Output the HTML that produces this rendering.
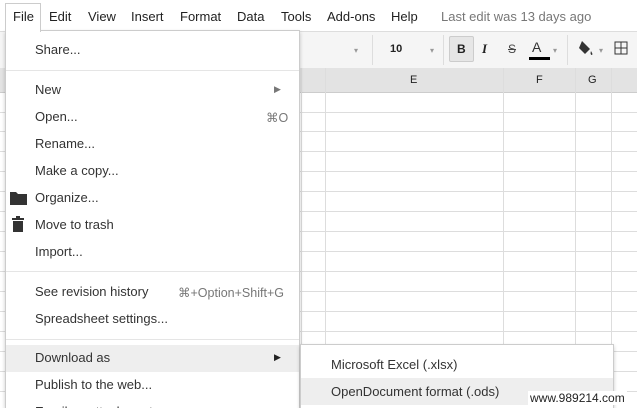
<!DOCTYPE html><html style="overflow:hidden;height:408px"><head><style>
body{margin:0;width:637px;height:408px;overflow:hidden;background:#fff;font-family:"Liberation Sans",sans-serif;position:relative;color:#222}
.a{position:absolute;white-space:nowrap}
.mb{position:absolute;left:0;top:0;z-index:4}
.mb span{position:absolute;top:9px;font-size:13px;color:#222;white-space:nowrap}
.mi{position:absolute;left:35px;font-size:13px;color:#333;white-space:nowrap}
.sc{position:absolute;font-size:12.5px;color:#777;white-space:nowrap}
.hl{position:absolute;background:#eee}
.sep{position:absolute;left:6px;width:293px;height:1px;background:#e5e5e5}
</style></head><body>
<div class="a" style="left:0;top:31px;width:637px;height:37px;background:#f5f5f5;border-top:1px solid #ddd"></div>
<div class="a" style="left:372px;top:35px;width:1px;height:30px;background:#ddd"></div>
<div class="a" style="left:443px;top:35px;width:1px;height:30px;background:#ddd"></div>
<div class="a" style="left:567px;top:35px;width:1px;height:30px;background:#ddd"></div>
<div class="a" style="left:354px;top:46px;font-size:8px;color:#999">▾</div>
<div class="a" style="left:390px;top:43px;font-size:11px;font-weight:bold">10</div>
<div class="a" style="left:430px;top:46px;font-size:8px;color:#999">▾</div>
<div class="a" style="left:449px;top:36px;width:25px;height:26px;background:#e6e6e6;border:1px solid #ccc;border-radius:2px;box-sizing:border-box"></div>
<div class="a" style="left:457px;top:42px;font-size:12px;font-weight:bold">B</div>
<div class="a" style="left:482px;top:41px;font-size:13px;font-style:italic;font-weight:bold;font-family:'Liberation Serif'">I</div>
<div class="a" style="left:508px;top:42px;font-size:12px;color:#444;text-decoration:line-through">S</div>
<div class="a" style="left:532px;top:39px;font-size:14px;color:#333">A</div>
<div class="a" style="left:529px;top:57px;width:21px;height:3px;background:#000"></div>
<div class="a" style="left:553px;top:46px;font-size:8px;color:#999">▾</div>
<svg class="a" style="left:576px;top:38px" width="20" height="20"><path d="M6 3l8 8-5 5-6-6z" fill="#333"/><path d="M15 13c1 2 2 3 1 4-1 0-2-1-1-4z" fill="#333"/></svg>
<div class="a" style="left:599px;top:46px;font-size:8px;color:#999">▾</div>
<svg class="a" style="left:614px;top:41px" width="14" height="14"><rect x="1" y="1" width="12" height="12" fill="none" stroke="#333"/><path d="M7 1v12M1 7h12" stroke="#333"/></svg>
<div class="a" style="left:0;top:68px;width:637px;height:24px;background:#e3e3e3;border-bottom:1px solid #ccc"></div>
<div class="a" style="left:410px;top:74px;font-size:11px">E</div>
<div class="a" style="left:536px;top:74px;font-size:11px">F</div>
<div class="a" style="left:588px;top:74px;font-size:11px">G</div>
<svg class="a" style="left:0;top:68px" width="637" height="340">
<g stroke="#ddd" stroke-width="1">
<path d="M301.5 0V340M325.5 0V340M503.5 0V340M575.5 0V340M611.5 0V340"/>
<path d="M0 44.5H637M0 63.5H637M0 83.5H637M0 103.5H637M0 123.5H637M0 143.5H637M0 163.5H637M0 183.5H637M0 203.5H637M0 223.5H637M0 243.5H637M0 263.5H637M0 283.5H637M0 303.5H637M0 323.5H637"/>
</g></svg>
<div class="a" style="left:0;top:0;width:637px;height:31px;background:#fff"></div>
<div class="a" style="left:5px;top:3px;width:36px;height:29px;border:1px solid #ccc;border-bottom:none;background:#fff;box-sizing:border-box;z-index:3"></div>
<div class="mb">
<span style="left:13px">File</span><span style="left:49px">Edit</span><span style="left:88px">View</span><span style="left:131px">Insert</span><span style="left:180px">Format</span><span style="left:237px">Data</span><span style="left:281px">Tools</span><span style="left:327px">Add-ons</span><span style="left:391px">Help</span><span style="left:441px;color:#777">Last edit was 13 days ago</span></div>
<div class="a" style="left:5px;top:30px;width:295px;height:378px;background:#fff;border:1px solid #ccc;border-bottom:none;box-sizing:border-box;box-shadow:0 2px 4px rgba(0,0,0,.2);z-index:2"></div>
<div style="position:absolute;left:0;top:0;width:637px;height:408px;z-index:3">
<div class="mi" style="top:42px">Share...</div>
<div class="sep" style="top:70px"></div>
<div class="mi" style="top:82px">New</div><div class="sc" style="left:274px;top:84px;font-size:9px">▶</div>
<div class="mi" style="top:109px">Open...</div><div class="sc" style="left:266px;top:110px">⌘O</div>
<div class="mi" style="top:136px">Rename...</div>
<div class="mi" style="top:163px">Make a copy...</div>
<svg class="a" style="left:10px;top:191px" width="17" height="14"><path d="M0 1h6l2 2h9v11H0z" fill="#333"/></svg>
<div class="mi" style="top:190px">Organize...</div>
<svg class="a" style="left:12px;top:216px" width="12" height="16"><path d="M0 2h12v2H0zM4 0h4v2H4zM1 5h10v11H1z" fill="#333"/></svg>
<div class="mi" style="top:217px">Move to trash</div>
<div class="mi" style="top:244px">Import...</div>
<div class="sep" style="top:271px"></div>
<div class="mi" style="top:284px">See revision history</div><div class="sc" style="left:178px;top:285px">⌘+Option+Shift+G</div>
<div class="mi" style="top:311px">Spreadsheet settings...</div>
<div class="sep" style="top:339px"></div>
<div class="hl" style="left:6px;top:345px;width:293px;height:27px"></div>
<div class="mi" style="top:350px">Download as</div><div class="sc" style="left:274px;top:352px;font-size:9px;color:#222">▶</div>
<div class="mi" style="top:377px">Publish to the web...</div>
<div class="mi" style="top:404px">Email as attachment...</div>
</div>
<div class="a" style="left:300px;top:344px;width:314px;height:64px;background:#fff;border:1px solid #ccc;border-bottom:none;box-sizing:border-box;box-shadow:0 2px 4px rgba(0,0,0,.2);z-index:4"></div>
<div class="hl" style="left:301px;top:378px;width:312px;height:27px;z-index:5"></div>
<div class="mi" style="left:331px;top:357px;z-index:6">Microsoft Excel (.xlsx)</div>
<div class="mi" style="left:331px;top:384px;z-index:6">OpenDocument format (.ods)</div>
<div class="a" style="left:528px;top:391px;font-size:12px;color:#222;z-index:7;background:#fff;padding:0 2px">www.989214.com</div>
</body></html>
